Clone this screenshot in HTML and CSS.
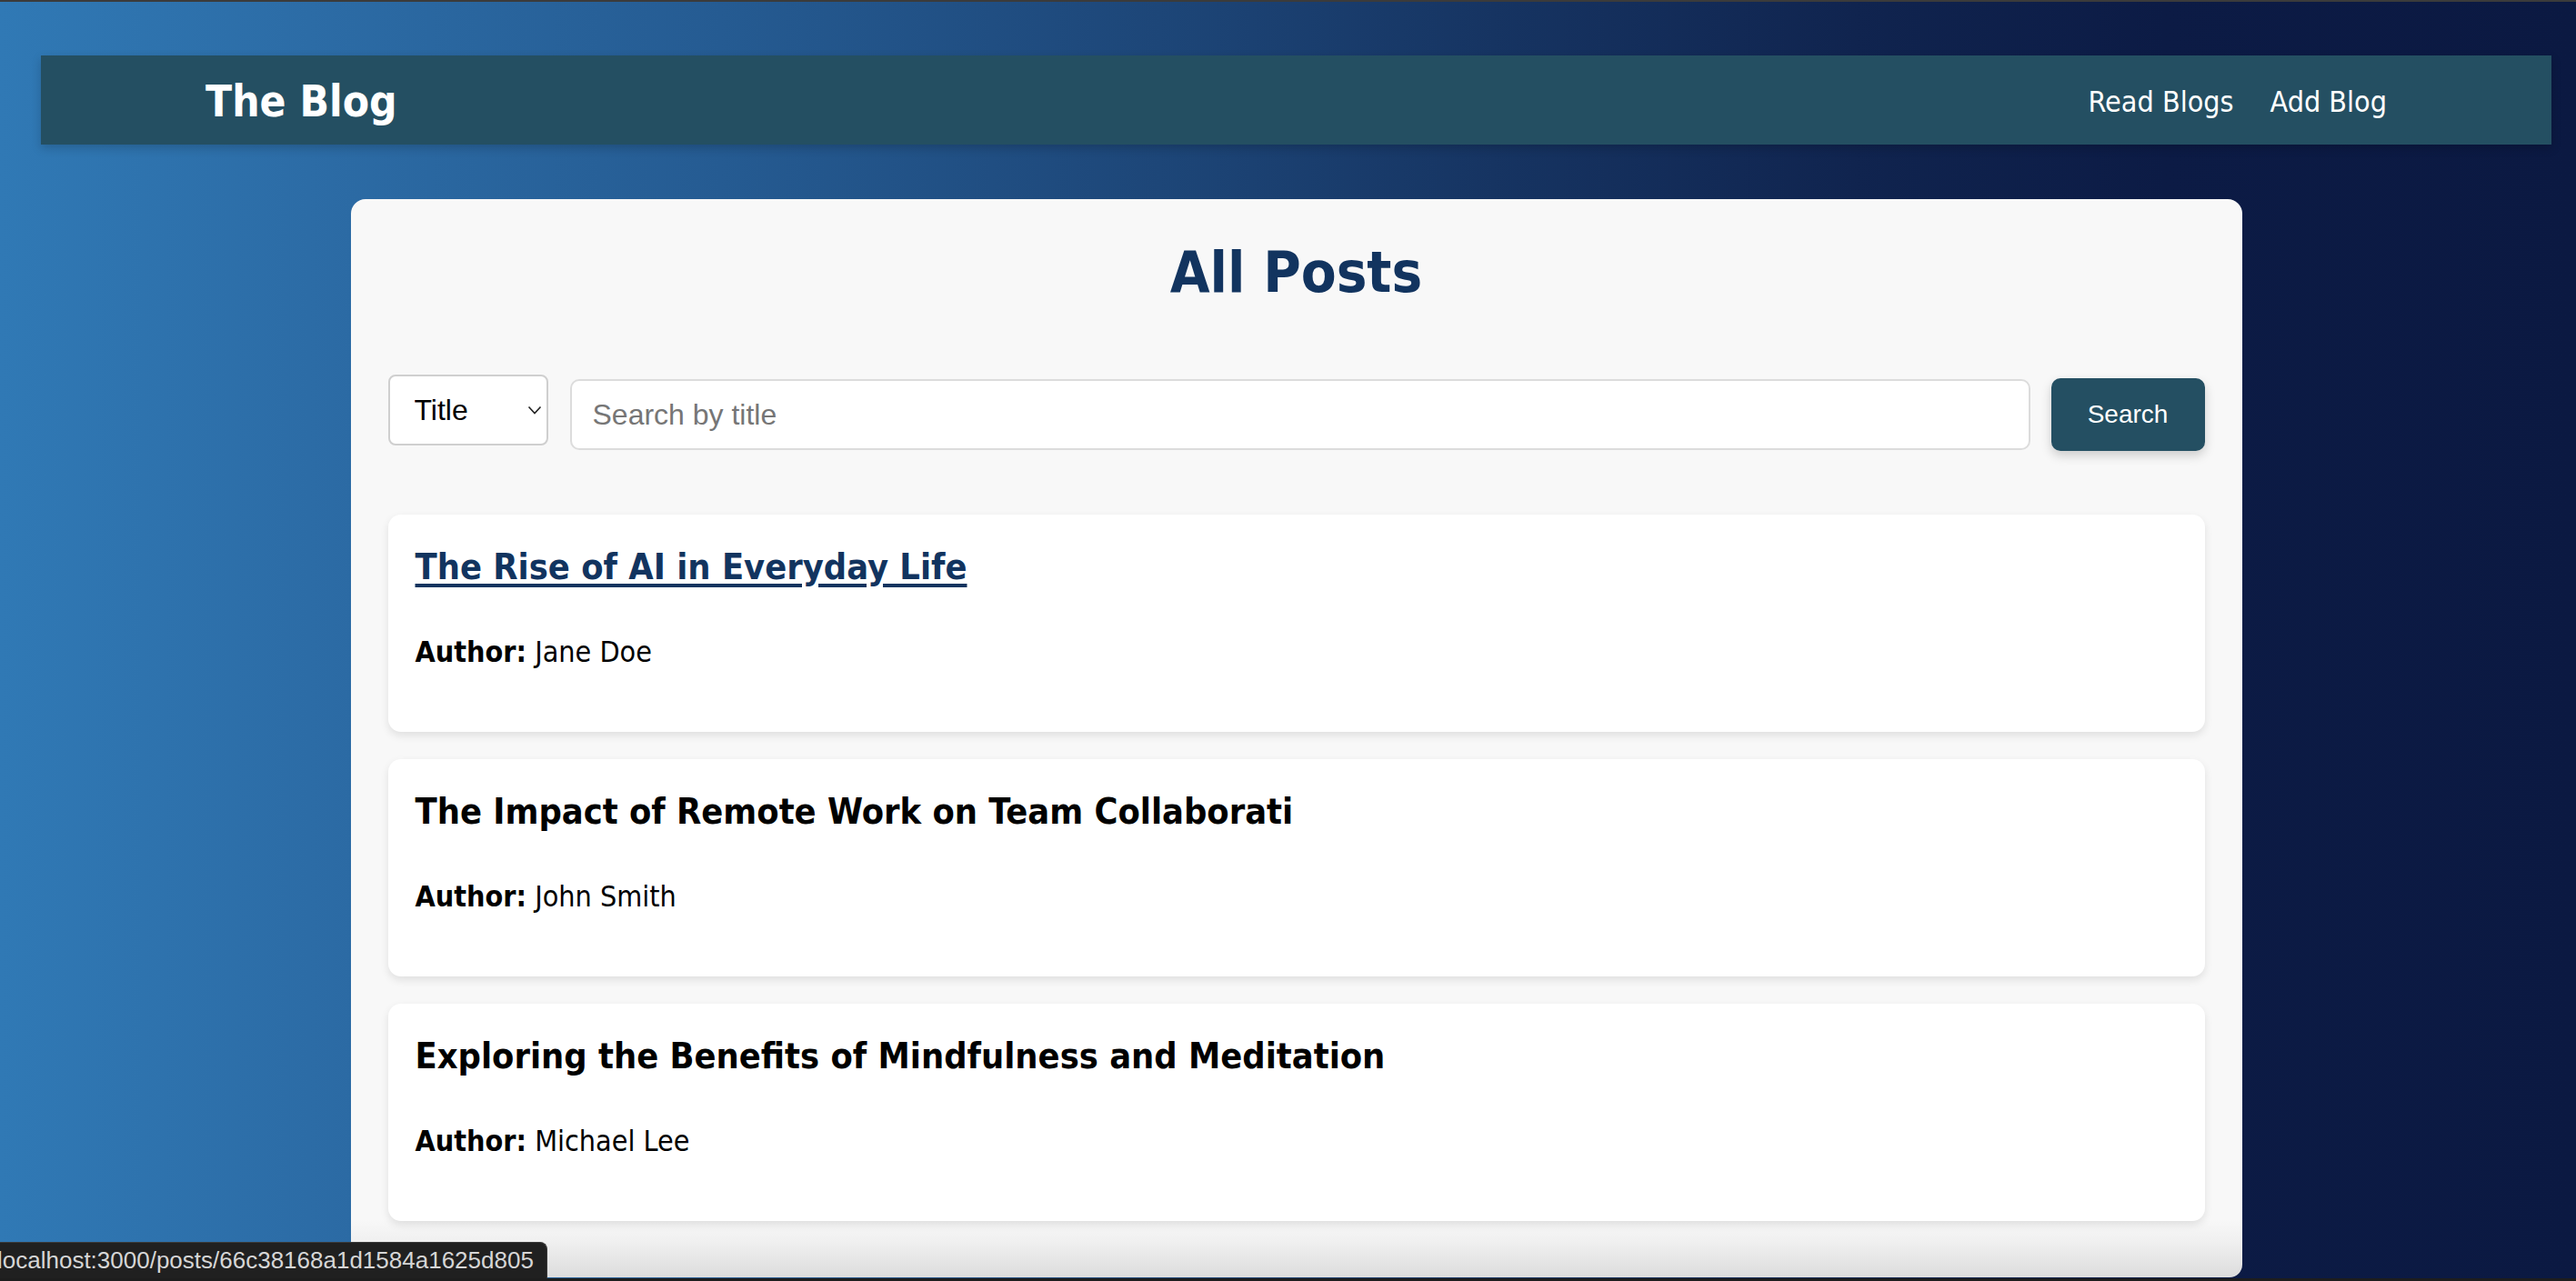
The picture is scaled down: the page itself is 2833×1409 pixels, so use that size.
FILE: index.html
```html
<!DOCTYPE html>
<html lang="en">
<head>
<meta charset="utf-8">
<title>The Blog</title>
<link rel="stylesheet" href="styles.css">
</head>
<body>
<div class="page">
  <header class="navbar">
    <a class="brand" href="#">The Blog</a>
    <nav class="nav-links">
      <a href="#">Read Blogs</a>
      <a href="#">Add Blog</a>
    </nav>
  </header>

  <main class="panel">
    <h1 class="panel-title">All Posts</h1>

    <form class="search-row">
      <div class="select-wrap">
        <select class="search-select">
          <option>Title</option>
          <option>Author</option>
        </select>
        <svg class="chevron" width="16" height="10" viewBox="0 0 16 10"><path d="M1.5 1.5 L8 8.5 L14.5 1.5" fill="none" stroke="#222" stroke-width="1.6"/></svg>
      </div>
      <input class="search-input" type="text" placeholder="Search by title">
      <button class="search-btn" type="button">Search</button>
    </form>

    <article class="post">
      <h2 class="post-title"><a class="post-link" href="#">The Rise of AI in Everyday Life</a></h2>
      <p class="post-author"><strong>Author:</strong> Jane Doe</p>
    </article>
    <article class="post">
      <h2 class="post-title">The Impact of Remote Work on Team Collaborati</h2>
      <p class="post-author"><strong>Author:</strong> John Smith</p>
    </article>
    <article class="post">
      <h2 class="post-title">Exploring the Benefits of Mindfulness and Meditation</h2>
      <p class="post-author"><strong>Author:</strong> Michael Lee</p>
    </article>
  </main>
</div>
<div class="status-bar"><span class="status-text">localhost:3000/posts/66c38168a1d1584a1625d805</span></div>
</body>
</html>
```
FILE: styles.css
```css
* { box-sizing: border-box; }

html, body {
  margin: 0;
  padding: 0;
  height: 1409px;
  overflow: hidden;
  background: #1d1d1d;
}

.page {
  height: 1406px;
  border-top: 2px solid #3b3b3b;
  padding: 59px 27px 0 45px;
  background: linear-gradient(90deg, #3079b5 0%, #2c6ca6 12%, #255b92 28%, #1d4678 45%, #163462 58%, #10244f 72%, #0c1b45 84%, #0b1942 100%);
  font-family: "DejaVu Sans Condensed", "DejaVu Sans", sans-serif;
  font-stretch: condensed;
}

.navbar {
  height: 98px;
  background: #244f62;
  box-shadow: 0 4px 10px rgba(0, 0, 0, 0.18);
  display: flex;
  align-items: center;
  justify-content: space-between;
  padding: 3px 181px 0 181px;
}

.brand {
  color: #fff;
  text-decoration: none;
  font-weight: bold;
  font-size: 47.5px;
}

.nav-links {
  display: flex;
  gap: 40px;
  padding-top: 1px;
}

.nav-links a {
  color: #fff;
  text-decoration: none;
  font-size: 32px;
}

.panel {
  width: 2080px;
  height: 1186px;
  margin: 60px auto 0;
  padding: 43px 41px 0;
  border-radius: 16px 16px 14px 14px;
  background: linear-gradient(180deg, #f8f8f8 0%, #f8f8f8 calc(100% - 64px), #f0f0f0 calc(100% - 40px), #dcdcdc 100%);
  overflow: hidden;
}

.panel-title {
  margin: 0 0 75px;
  text-align: center;
  font-size: 63px;
  font-weight: bold;
  color: #12345f;
  line-height: 75px;
}

.search-row {
  display: flex;
  align-items: flex-start;
  margin: 0 0 70px;
}

.select-wrap {
  position: relative;
  width: 176px;
  height: 78px;
  margin-right: 24px;
}

.search-select {
  appearance: none;
  -webkit-appearance: none;
  width: 100%;
  height: 100%;
  border: 2px solid #cfcfcf;
  border-radius: 8px;
  background: #fff;
  padding: 0 0 0 27px;
  font-family: "Liberation Sans", Arial, sans-serif;
  font-size: 32px;
  color: #000;
}

.chevron {
  position: absolute;
  left: 153px;
  top: 34px;
  pointer-events: none;
}

.search-input {
  flex: 1;
  height: 78px;
  margin-top: 5px;
  margin-right: 23px;
  border: 2px solid #dcdcdc;
  border-radius: 10px;
  background: #fff;
  padding: 0 0 0 23px;
  font-family: "Liberation Sans", Arial, sans-serif;
  font-size: 32px;
  color: #222;
}

.search-input::placeholder { color: #767676; }

.search-btn {
  width: 169px;
  height: 80px;
  margin-top: 4px;
  border: none;
  border-radius: 10px;
  background: #244f62;
  color: #fff;
  font-family: "Liberation Sans", Arial, sans-serif;
  font-size: 28px;
  box-shadow: 0 5px 12px rgba(0, 0, 0, 0.18);
}

.post {
  background: #fff;
  border-radius: 14px;
  box-shadow: 0 4px 10px rgba(0, 0, 0, 0.1);
  padding: 30px 30px;
  margin-bottom: 30px;
}

.post-title {
  margin: 4px 0 52px;
  font-size: 39.4px;
  font-weight: bold;
  line-height: 47px;
  color: #000;
}

.post-link {
  color: #12345f;
  text-decoration: underline;
  text-decoration-thickness: 4px;
  text-underline-offset: 5px;
}

.post-author {
  margin: 0 0 39px;
  font-size: 32px;
  line-height: 37px;
  color: #000;
}

.status-bar {
  position: fixed;
  left: 0;
  bottom: 3px;
  height: 40px;
  padding: 0 14px 0 0;
  background: #202020;
  border: 1px solid #3a3a3a;
  border-left: none;
  border-bottom: none;
  border-radius: 0 8px 0 0;
  display: flex;
  align-items: center;
  overflow: hidden;
}

.status-text {
  margin-left: -3px;
  font-family: "Liberation Sans", Arial, sans-serif;
  font-size: 26px;
  color: #d6d6d6;
  white-space: nowrap;
}
```
